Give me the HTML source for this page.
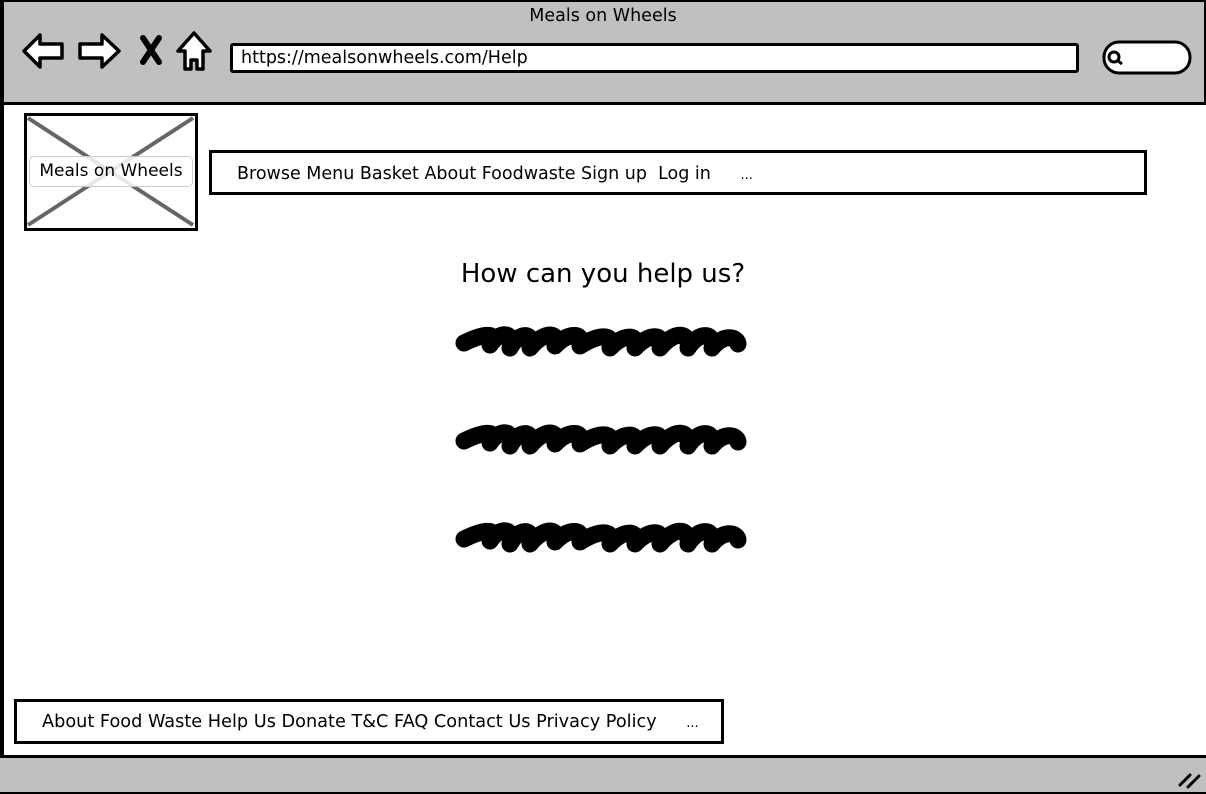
<!DOCTYPE html>
<html><head><meta charset="utf-8"><style>
*{margin:0;padding:0;box-sizing:border-box}
body{width:1206px;height:794px;background:#fff;position:relative;overflow:hidden;font-family:"DejaVu Sans",sans-serif;color:#000}
.a{position:absolute}
.box{position:absolute;border:3px solid #000;background:#fff}
</style></head><body>
<div class="a" style="left:0;top:0;width:1206px;height:105px;background:#c0c0c0;border:2px solid #000;border-bottom:3px solid #000"></div>
<div class="a" style="left:0;top:0;width:4px;height:794px;background:#000"></div>
<div class="a" style="left:0;top:755px;width:1206px;height:39px;background:#c0c0c0;border-top:3px solid #000;border-bottom:2px solid #000"></div>
<div class="a" style="left:0;top:6px;width:1206px;text-align:center;font-size:17.5px">Meals on Wheels</div>
<svg class="a" style="left:0;top:0" width="1206" height="794">
<g fill="#fff" stroke="#000" stroke-width="3.5" stroke-linejoin="round">
<path d="M24 51 L40 35 L40 44 L62 44 L62 58 L40 58 L40 67 Z"/>
<path d="M119 51 L102 35 L102 44 L80 44 L80 58 L102 58 L102 67 Z"/>
<path d="M178 51 L194 33 L210 51 L203 51 L203 69 L197 69 L197 60 L191 60 L191 69 L185 69 L185 51 Z"/>
</g>
<path d="M143 38 L159 62 M159 38 L143 62" stroke="#000" stroke-width="6" stroke-linecap="round"/>
<rect x="1104" y="42" width="86" height="31" rx="15" fill="#fff" stroke="#000" stroke-width="3"/>
<circle cx="1114" cy="57" r="5" fill="none" stroke="#000" stroke-width="3"/>
<path d="M1117 60 L1122 64" stroke="#000" stroke-width="3"/>
<path d="M1180 785 L1190 775 M1188 787 L1199 776" stroke="#000" stroke-width="3" stroke-linecap="round"/>
<g fill="none" stroke="#000" stroke-width="2.5">
<line x1="28" y1="118" x2="193" y2="225" stroke="#666" stroke-width="4"/>
<line x1="193" y1="118" x2="28" y2="225" stroke="#666" stroke-width="4"/>
</g>
<g fill="none" stroke="#000" stroke-width="17" stroke-linecap="round" stroke-linejoin="round">
<path id="s" d="M464 343 C480 335 500 330 490 345 C500 330 515 332 510 348 C520 330 535 333 530 348 C545 330 560 332 555 346 C570 330 585 334 580 346 C600 333 615 334 610 348 C625 332 640 335 635 348 C650 332 665 334 660 348 C675 330 690 332 688 348 C700 330 715 333 712 348 C725 332 738 338 738 344"/>
<use href="#s" y="98"/>
<use href="#s" y="196"/>
</g>
</svg>
<div class="box" style="left:230px;top:43px;width:849px;height:30px;border-radius:3px;font-size:17.5px;padding:2px 8px">https://mealsonwheels.com/Help</div>
<div class="a" style="left:24px;top:113px;width:174px;height:118px;border:3px solid #000"></div>
<div class="a" style="left:29px;top:156px;width:164px;height:31px;border:1px solid #ccc;border-radius:5px;background:rgba(255,255,255,.85);font-size:17px;text-align:center;line-height:29px">Meals on Wheels</div>
<div class="box" style="left:209px;top:150px;width:938px;height:45px;font-size:17.5px;padding:11px 25px;white-space:nowrap">Browse Menu Basket About Foodwaste Sign up&nbsp; Log in <span style="margin-left:24px;font-size:13px">...</span></div>
<div class="a" style="left:0;top:259px;width:1206px;text-align:center;font-size:26px">How can you help us?</div>
<div class="box" style="left:14px;top:699px;width:710px;height:45px;font-size:17.7px;padding:10px 25px;white-space:nowrap">About Food Waste Help Us Donate T&amp;C FAQ Contact Us Privacy Policy <span style="margin-left:24px;font-size:13px">...</span></div>
</body></html>
